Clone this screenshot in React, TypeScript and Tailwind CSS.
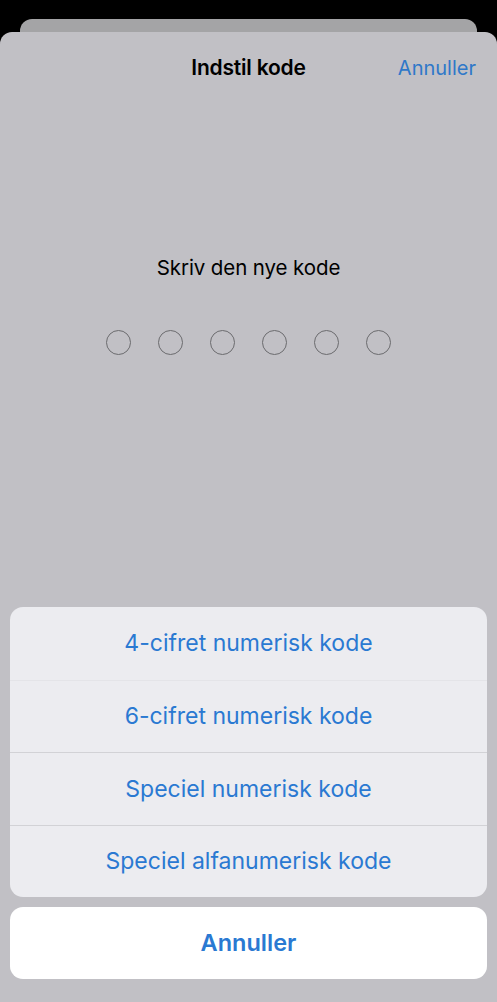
export default function App() {
  const options = [
    "4-cifret numerisk kode",
    "6-cifret numerisk kode",
    "Speciel numerisk kode",
    "Speciel alfanumerisk kode",
  ];

  return (
    <div
      className="h-[1002px] w-[497px] bg-black flex flex-col overflow-hidden"
      style={{ fontFamily: "Inter, 'Noto Sans', sans-serif" }}
    >
      {/* sheet behind */}
      <div className="mt-[19px] mx-[20px] h-[13px] rounded-t-[12px] bg-[#a4a4a6]" />

      <div className="flex-1 flex flex-col rounded-t-[12px] bg-[#c1c0c5]">
        <div className="relative h-[72px] flex items-center justify-center">
          <span className="text-[21px] font-semibold text-black tracking-[-0.2px]">Indstil kode</span>
          <span className="absolute right-[21px] text-[20px] text-[#2f78c9]">Annuller</span>
        </div>

        <p className="mt-[152px] text-center text-[20.5px] leading-[24px] text-black tracking-[-0.1px]">
          Skriv den nye kode
        </p>

        <div className="mt-[50px] flex justify-center gap-[27px]">
          {Array.from({ length: 6 }).map((_, i) => (
            <div key={i} className="w-[25px] h-[25px] rounded-full border-[1.6px] border-[#6b6b6e]" />
          ))}
        </div>

        <div className="mt-auto mx-[10px] rounded-[13px] bg-[#ececf0] overflow-hidden">
          {options.map((o, i) => (
            <div
              key={o}
              className={
                "h-[72.5px] flex items-center justify-center text-[23px] text-[#2a79d2] " +
                (i === 1 ? "border-t border-[#e4e4e8]" : i > 1 ? "border-t border-[#d2d2d6]" : "")
              }
            >
              {o}
            </div>
          ))}
        </div>

        <div className="mt-[10px] mb-[23px] mx-[10px] h-[72px] rounded-[13px] bg-white flex items-center justify-center">
          <span className="text-[23.5px] font-semibold text-[#2a79d2]">Annuller</span>
        </div>
      </div>
    </div>
  );
}
